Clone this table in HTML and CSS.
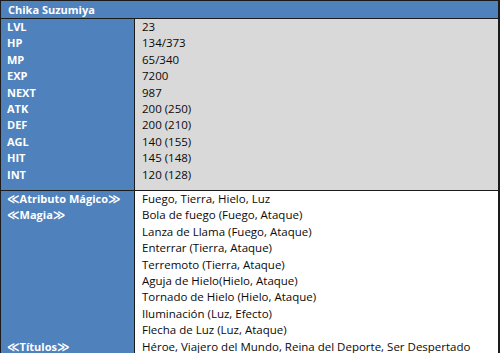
FILE: index.html
```html
<!DOCTYPE html>
<html lang="es">
<head>
<meta charset="utf-8">
<link rel="stylesheet" href="styles.css">
</head>
<body>
<div class="sheet">
  <div class="title">Chika Suzumiya</div>
  <div class="section stats">
    <div class="col labels">
      <div class="line">LVL</div>
      <div class="line">HP</div>
      <div class="line">MP</div>
      <div class="line">EXP</div>
      <div class="line">NEXT</div>
      <div class="line">ATK</div>
      <div class="line">DEF</div>
      <div class="line">AGL</div>
      <div class="line">HIT</div>
      <div class="line">INT</div>
    </div>
    <div class="col values">
      <div class="line">23</div>
      <div class="line">134/373</div>
      <div class="line">65/340</div>
      <div class="line">7200</div>
      <div class="line">987</div>
      <div class="line">200 (250)</div>
      <div class="line">200 (210)</div>
      <div class="line">140 (155)</div>
      <div class="line">145 (148)</div>
      <div class="line">120 (128)</div>
    </div>
  </div>
  <div class="section magic">
    <div class="col labels">
      <div class="line"><span class="br">≪</span>Atributo Mágico<span class="br">≫</span></div>
      <div class="line"><span class="br">≪</span>Magia<span class="br">≫</span></div>
      <div class="line"></div>
      <div class="line"></div>
      <div class="line"></div>
      <div class="line"></div>
      <div class="line"></div>
      <div class="line"></div>
      <div class="line"></div>
      <div class="line"><span class="br">≪</span>Títulos<span class="br">≫</span></div>
    </div>
    <div class="col values plain">
      <div class="line">Fuego, Tierra, Hielo, Luz</div>
      <div class="line">Bola de fuego (Fuego, Ataque)</div>
      <div class="line">Lanza de Llama (Fuego, Ataque)</div>
      <div class="line">Enterrar (Tierra, Ataque)</div>
      <div class="line">Terremoto (Tierra, Ataque)</div>
      <div class="line">Aguja de Hielo(Hielo, Ataque)</div>
      <div class="line">Tornado de Hielo (Hielo, Ataque)</div>
      <div class="line">Iluminación (Luz, Efecto)</div>
      <div class="line">Flecha de Luz (Luz, Ataque)</div>
      <div class="line">Héroe, Viajero del Mundo, Reina del Deporte, Ser Despertado</div>
    </div>
  </div>
</div>
</body>
</html>
```
FILE: styles.css
```css
html, body {
  margin: 0;
  padding: 0;
  background: #ffffff;
}
body {
  font-family: "Open Sans", "DejaVu Sans", sans-serif;
  font-size: 11px;
  color: #0a0a0a;
}
.sheet {
  width: 497px;
  border: 1px solid #1b1b1b;
  border-right-width: 2px;
}
.title {
  height: 17px;
  line-height: 17px;
  background: #4f81bd;
  color: #ffffff;
  font-weight: bold;
  padding-left: 7px;
  border-bottom: 1px solid #1b1b1b;
}
.section {
  display: grid;
  grid-template-columns: 134px 1fr;
}
.stats {
  height: 171px;
  border-bottom: 1px solid #1b1b1b;
}
.magic {
  height: 161px;
}
.col {
  display: flex;
  flex-direction: column;
}
.labels {
  background: #4f81bd;
  color: #ffffff;
  font-weight: bold;
  border-right: 1px solid #1b1b1b;
  padding-left: 6px;
}
.values {
  background: #d9d9d9;
  padding-left: 7px;
  font-size: 11.5px;
}
.values.plain {
  background: #ffffff;
}
.line {
  height: 16.4px;
  line-height: 16.4px;
  white-space: nowrap;
}
.br {
  font-family: "DejaVu Sans", sans-serif;
  font-size: 12px;
  font-weight: bold;
}
```
